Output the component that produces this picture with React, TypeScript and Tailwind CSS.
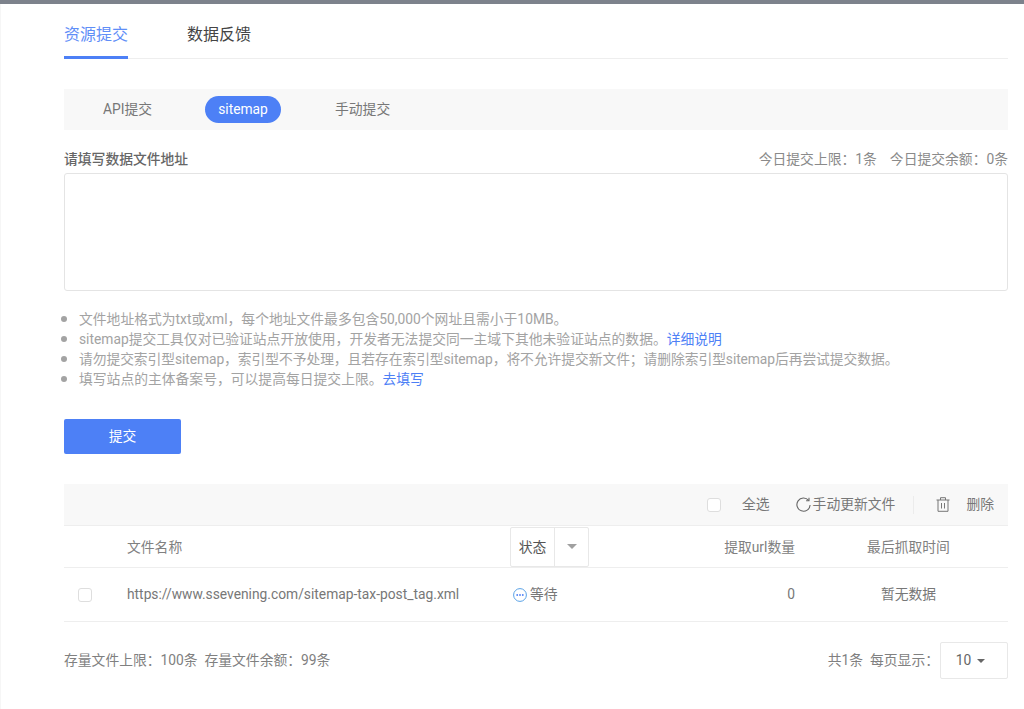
const font = '[font-family:Roboto,"Noto_Sans_CJK_SC",sans-serif]';

const notes = [
  '文件地址格式为txt或xml，每个地址文件最多包含50,000个网址且需小于10MB。',
  'sitemap提交工具仅对已验证站点开放使用，开发者无法提交同一主域下其他未验证站点的数据。',
  '请勿提交索引型sitemap，索引型不予处理，且若存在索引型sitemap，将不允许提交新文件；请删除索引型sitemap后再尝试提交数据。',
  '填写站点的主体备案号，可以提高每日提交上限。',
];

function Checkbox() {
  return <span className="block h-[14px] w-[14px] rounded-[3px] border border-[#dedede] bg-white" />;
}

function Caret({ color, width = 10 }: { color: string; width?: number }) {
  return (
    <svg width={width} height={width / 2} viewBox="0 0 10 5" fill={color}>
      <path d="M0 0h10L5 5z" />
    </svg>
  );
}

function RefreshIcon() {
  return (
    <svg width="15" height="15" viewBox="0 0 15 15" fill="none" stroke="#666666" strokeWidth="1.1" className="ml-[26px]">
      <path d="M12.6 3.4A6.6 6.6 0 1 0 14.1 8" />
      <path d="M13 .8v2.9h-2.9" />
    </svg>
  );
}

function TrashIcon() {
  return (
    <svg width="14" height="15" viewBox="0 0 14 15" fill="none" stroke="#777777" strokeWidth="1" className="ml-[22px]">
      <path d="M.5 3h13M4.5 3V.7h5V3M2 3v11.3h10V3M5.5 6v5.5M8.5 6v5.5" />
    </svg>
  );
}

function Tabs() {
  return (
    <div className="flex h-[55px] gap-[59px] border-b border-[#eeeeee] text-[16px]">
      <div className="h-[55px] w-[64px] border-b-[3px] border-[#4d80f6] pt-[19px] leading-[24px] text-[#5f8ef7]">
        资源提交
      </div>
      <div className="pt-[19px] leading-[24px] text-[#444444]">数据反馈</div>
    </div>
  );
}

function SubmitTypes() {
  return (
    <div className="mt-[30px] flex h-[41px] items-center bg-[#f8f8f8] pl-[39px] text-[#777777]">
      <span className="w-[102px]">API提交</span>
      <span className="flex h-[27px] w-[76px] items-center justify-center rounded-full bg-[#4d80f6] text-white">
        sitemap
      </span>
      <span className="ml-[54px]">手动提交</span>
    </div>
  );
}

function SubmitForm() {
  return (
    <>
      <div className="mt-[19px] flex h-[20px] items-center justify-between">
        <span className="font-medium text-[#666666]">请填写数据文件地址</span>
        <span className="flex gap-[13px] text-[#8a8a8a]">
          <span>今日提交上限：1条</span>
          <span>今日提交余额：0条</span>
        </span>
      </div>
      <div className="mt-[4px] h-[118px] rounded-[3px] border border-[#e4e4e4] bg-white" />
      <ul className="mt-[17px] list-disc pl-[15px] leading-[20px] text-[#a3a3a3] marker:text-[18px]">
        <li className="h-[20px]">{notes[0]}</li>
        <li className="h-[20px]">
          {notes[1]}
          <span className="text-[#4d80f6]">详细说明</span>
        </li>
        <li className="h-[20px] tracking-[-0.08px]">{notes[2]}</li>
        <li className="h-[20px]">
          {notes[3]}
          <span className="text-[#4d80f6]">去填写</span>
        </li>
      </ul>
      <button
        type="button"
        className="mt-[31px] block h-[35px] w-[117px] rounded-[2px] bg-[#4d80f6] text-white"
      >
        提交
      </button>
    </>
  );
}

function FileTable() {
  return (
    <div className="mt-[30px]">
      <div className="flex h-[42px] items-center border-b border-[#eeeeee] bg-[#f8f8f8] pl-[643px] text-[#777777]">
        <Checkbox />
        <span className="ml-[21px]">全选</span>
        <RefreshIcon />
        <span className="ml-[2px]">手动更新文件</span>
        <span className="ml-[18px] h-[18px] w-px bg-[#ececec]" />
        <TrashIcon />
        <span className="ml-[16px]">删除</span>
      </div>
      <div className="grid h-[42px] grid-cols-[63px_383px_120px_165px_213px] items-center border-b border-[#eeeeee] text-[#808080]">
        <span />
        <span className="pt-[1px]">文件名称</span>
        <div className="flex h-[40px] w-[79px] items-center rounded-[2px] border border-[#e8e8e8]">
          <span className="flex h-full w-[44px] items-center justify-center border-r border-[#e8e8e8] pt-[1px] text-[#555555]">
            状态
          </span>
          <span className="flex flex-1 justify-center">
            <Caret color="#a0a0a0" />
          </span>
        </div>
        <span className="pt-[1px] text-right">提取url数量</span>
        <span className="pl-[14px] pt-[1px] text-center">最后抓取时间</span>
      </div>
      <div className="grid h-[54px] grid-cols-[63px_383px_120px_165px_213px] items-center border-b border-[#eeeeee] text-[#777777]">
        <span className="pl-[14px]">
          <Checkbox />
        </span>
        <span>https://www.ssevening.com/sitemap-tax-post_tag.xml</span>
        <span className="flex items-center gap-[3px] pl-[3px]">
          <svg width="14" height="14" viewBox="0 0 14 14" fill="none">
            <circle cx="7" cy="7" r="6.4" stroke="#5aa2e6" />
            <circle cx="4.2" cy="7" r="0.9" fill="#4d80f6" />
            <circle cx="7" cy="7" r="0.9" fill="#4d80f6" />
            <circle cx="9.8" cy="7" r="0.9" fill="#4d80f6" />
          </svg>
          等待
        </span>
        <span className="text-right">0</span>
        <span className="pl-[14px] text-center">暂无数据</span>
      </div>
    </div>
  );
}

function Footer() {
  return (
    <div className="mt-[20px] flex items-center justify-between text-[#808080]">
      <span>存量文件上限：100条&nbsp;&nbsp;存量文件余额：99条</span>
      <div className="flex items-center gap-[1px]">
        <span>共1条&nbsp;&nbsp;每页显示：</span>
        <div className="flex h-[37px] w-[68px] items-center justify-center gap-[6px] rounded-[2px] border border-[#e8e8e8] pr-[7px] text-[#666666]">
          10
          <Caret color="#666666" width={8} />
        </div>
      </div>
    </div>
  );
}

export default function App() {
  return (
    <div className={`min-h-screen bg-white text-[13.8px] ${font}`}>
      <div className="h-[4px] bg-[#7d828c]" />
      <div className="min-h-[705px] border-l border-[#f6f6f6] pl-[63px] pr-[16px]">
        <Tabs />
        <SubmitTypes />
        <SubmitForm />
        <FileTable />
        <Footer />
      </div>
    </div>
  );
}
